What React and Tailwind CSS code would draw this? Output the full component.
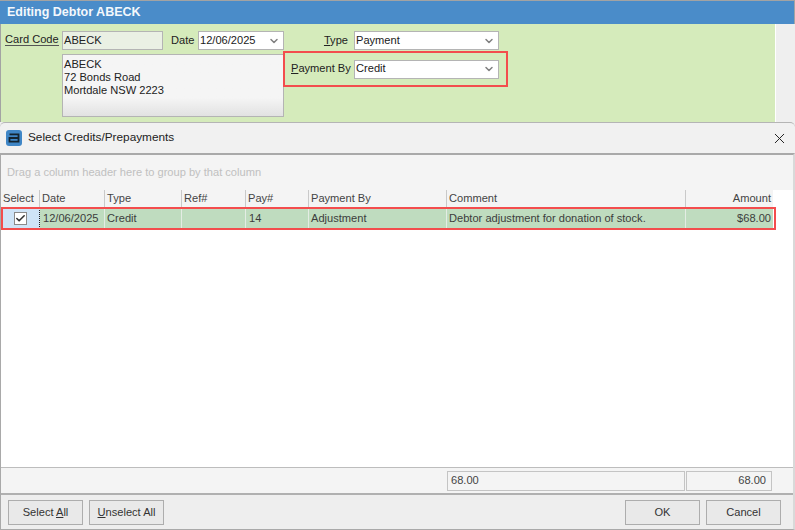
import { ChevronDown, X, Check } from "lucide-react"

const font = "font-['Liberation_Sans',sans-serif]"

function Combo({ value, className }) {
  return (
    <div className={"flex h-[19px] items-center justify-between border border-[#b4b4b4] bg-white pl-[1px] pr-[3px] text-[#1a1a1a] " + className}>
      <span>{value}</span>
      <ChevronDown size={12} strokeWidth={3} className="text-[#808080]" />
    </div>
  )
}

function Header({ children, className }) {
  return <div className={"flex h-full shrink-0 items-center border-r border-[#c9c9c9] pl-[2px] text-[#444] " + className}>{children}</div>
}

function Cell({ children, className }) {
  return <div className={"flex h-full shrink-0 items-center border-r border-[#e4ece4] pl-[2px] text-[#3c3c3c] " + className}>{children}</div>
}

function Btn({ children, className }) {
  return <button className={"h-[25px] w-[75px] border border-[#adadad] bg-[#e9e9e9] text-[#333] " + className}>{children}</button>
}

export default function App() {
  return (
    <div className={"flex h-[530px] w-[795px] flex-col overflow-hidden whitespace-nowrap bg-[#efefef] text-[11.1px] leading-none " + font}>
      <div className="flex h-[24px] shrink-0 items-center border-r border-t border-[#a3a3a3] bg-[#4a8cc9] pl-[7px] text-[12.5px] font-bold text-[#f4f8fc]">
        Editing Debtor ABECK
      </div>

      <div className="flex h-[98px] w-[776px] shrink-0 border-l border-r border-l-[#a3a3a3] border-r-white bg-[#d5ebbb] pl-[4px] pt-[7px]">
        <div className="w-[57px] pt-[3px]"><span className="border-b border-[#555] text-[#222]">Card Code</span></div>
        <div className="flex w-[222px] flex-col gap-[4px]">
          <div className="flex items-center">
            <div className="flex h-[19px] w-[101px] items-center border border-[#b4b4b4] bg-[#eaf0e4] pl-[1px] text-[#222]">ABECK</div>
            <span className="ml-[8px] w-[27px] text-[#222]">Date</span>
            <Combo value="12/06/2025" className="w-[86px]" />
          </div>
          <div className="h-[63px] w-[222px] border border-[#b4b4b4] bg-gradient-to-b from-[#f5f5f5] from-70% to-[#e2e2e2] pl-[1px] pt-[3px] leading-[13px] text-[#222]">
            ABECK<br />72 Bonds Road<br />Mortdale NSW 2223
          </div>
        </div>
        <div className="flex flex-col">
          <div className="flex items-center">
            <span className="w-[70px] pr-[6px] text-right text-[#222]"><u>T</u>ype</span>
            <Combo value="Payment" className="w-[145px]" />
          </div>
          <div className="-ml-[1px] mt-[1px] flex h-[36px] w-[225px] items-center border-2 border-[#f34d4d] pl-[6px]">
            <span className="w-[63px] text-[#222]"><u>P</u>ayment By</span>
            <Combo value="Credit" className="w-[145px]" />
          </div>
        </div>
      </div>

      <div className="flex h-[31px] w-full shrink-0 items-center justify-between rounded-t-[5px] border-t border-[#b5b5b5] bg-[#f1f1f1] pl-[6px] pr-[7px] text-[11.8px] text-[#222]">
        <div className="flex items-center gap-[6px]">
          <svg width="16" height="16" viewBox="0 0 16 16">
            <rect width="16" height="16" rx="3" fill="#3f86c6" />
            <path d="M3.5 4.4h9V11.6H3.5V8h9" fill="none" stroke="#14242f" strokeWidth="1.8" />
          </svg>
          Select Credits/Prepayments
        </div>
        <X size={17} strokeWidth={1.4} className="text-[#222]" />
      </div>

      <div className="flex min-h-0 flex-1 flex-col border-b border-l border-r-2 border-t-2 border-[#a9a9a9] border-r-[#d9d9d9] bg-white">
        <div className="flex h-[35px] shrink-0 items-center bg-[#f4f4f4] pl-[6px] text-[#c0c0c0]">
          Drag a column header here to group by that column
        </div>

        <div className="w-[772px]">
          <div className="flex h-[18px] bg-[#f4f4f4]">
            <Header className="w-[39px] pl-[1px]">Select</Header>
            <Header className="w-[65px]">Date</Header>
            <Header className="w-[77px]">Type</Header>
            <Header className="w-[64px]">Ref#</Header>
            <Header className="w-[63px]">Pay#</Header>
            <Header className="w-[138px]">Payment By</Header>
            <Header className="w-[239px]">Comment</Header>
            <div className="flex flex-1 items-center justify-end pr-[2px] text-[#444]">Amount</div>
          </div>
          <div className="relative flex h-[21px] bg-[#bfdcbf]">
            <div className="flex h-full w-[39px] shrink-0 items-center justify-center border-b border-r border-dotted border-[#222] bg-[#cfe4f7]">
              <div className="flex h-[13px] w-[13px] items-center justify-center border border-[#8a8a8a] bg-white">
                <Check size={11} strokeWidth={3.5} className="text-[#333]" />
              </div>
            </div>
            <Cell className="w-[65px] pl-[3px]">12/06/2025</Cell>
            <Cell className="w-[77px]">Credit</Cell>
            <Cell className="w-[64px]"></Cell>
            <Cell className="w-[63px] pl-[3px]">14</Cell>
            <Cell className="w-[138px]">Adjustment</Cell>
            <Cell className="w-[239px]">Debtor adjustment for donation of stock.</Cell>
            <div className="flex flex-1 items-center justify-end pr-[2px] text-[#3c3c3c]">$68.00</div>
            <div className="absolute inset-y-[-1px] left-0 right-[-3px] border-2 border-[#f34d4d]" />
          </div>
        </div>

        <div className="flex-1 bg-white" />

        <div className="flex h-[26px] shrink-0 items-center border-t border-[#bdbdbd] bg-[#f4f4f4]">
          <div className="ml-[446px] flex h-[20px] w-[238px] items-center border border-[#c4c4c4] pl-[3px] text-[#444]">68.00</div>
          <div className="ml-[1px] flex h-[20px] w-[86px] items-center justify-end border border-[#c4c4c4] pr-[5px] text-[#444]">68.00</div>
        </div>

        <div className="flex h-[36px] shrink-0 items-center justify-between border-t-2 border-[#b0b0b0] bg-[#eeeeee] pl-[7px] pr-[12px] pt-[1px]">
          <div className="flex gap-[6px]">
            <Btn>Select <u>A</u>ll</Btn>
            <Btn><u>U</u>nselect All</Btn>
          </div>
          <div className="flex gap-[6px]">
            <Btn className="border-[#3a9bef]">OK</Btn>
            <Btn>Cancel</Btn>
          </div>
        </div>
      </div>
    </div>
  )
}
